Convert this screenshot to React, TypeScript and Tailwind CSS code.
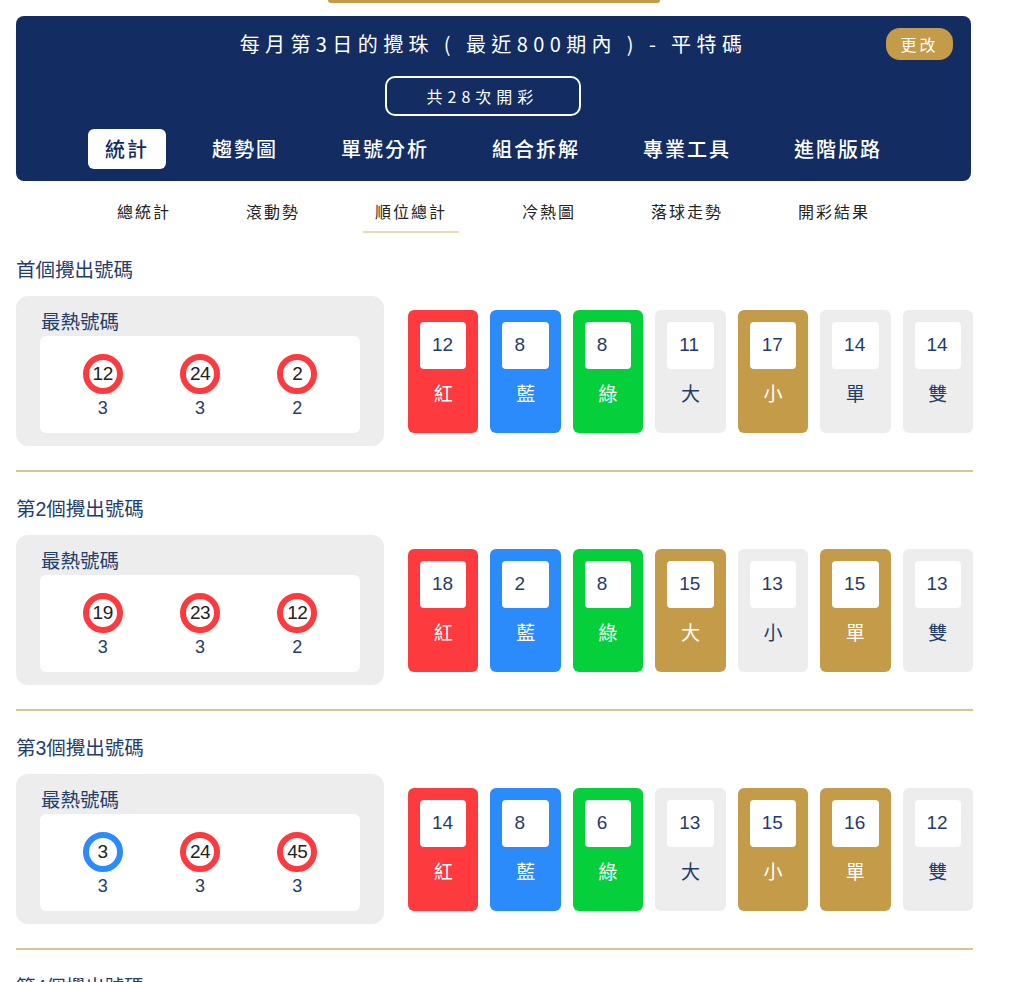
import React from "react";

type Card = { n: number; label: string; bg: string; fg: string };

const RED = "bg-[#fd3a3d]";
const BLUE = "bg-[#2b8bfb]";
const GREEN = "bg-[#05cf3a]";
const GOLD = "bg-[#c49b48]";
const GRAY = "bg-[#ededed]";

function mk(vals: number[], gold: boolean[]): Card[] {
  const labels = ["大", "小", "單", "雙"];
  return [
    { n: vals[0], label: "紅", bg: RED, fg: "text-white" },
    { n: vals[1], label: "藍", bg: BLUE, fg: "text-white" },
    { n: vals[2], label: "綠", bg: GREEN, fg: "text-white" },
    ...labels.map((l, i) => ({
      n: vals[3 + i],
      label: l,
      bg: gold[i] ? GOLD : GRAY,
      fg: gold[i] ? "text-white" : "text-[#1f3d6b]",
    })),
  ];
}

const sections = [
  {
    title: "首個攪出號碼",
    balls: [
      { n: 12, c: 3, color: "border-[#fd3a3d]" },
      { n: 24, c: 3, color: "border-[#fd3a3d]" },
      { n: 2, c: 2, color: "border-[#fd3a3d]" },
    ],
    cards: mk([12, 8, 8, 11, 17, 14, 14], [false, true, false, false]),
  },
  {
    title: "第2個攪出號碼",
    balls: [
      { n: 19, c: 3, color: "border-[#fd3a3d]" },
      { n: 23, c: 3, color: "border-[#fd3a3d]" },
      { n: 12, c: 2, color: "border-[#fd3a3d]" },
    ],
    cards: mk([18, 2, 8, 15, 13, 15, 13], [true, false, true, false]),
  },
  {
    title: "第3個攪出號碼",
    balls: [
      { n: 3, c: 3, color: "border-[#2b8bfb]" },
      { n: 24, c: 3, color: "border-[#fd3a3d]" },
      { n: 45, c: 3, color: "border-[#fd3a3d]" },
    ],
    cards: mk([14, 8, 6, 13, 15, 16, 12], [false, true, true, false]),
  },
];

const mainTabs = ["統計", "趨勢圖", "單號分析", "組合拆解", "專業工具", "進階版路"];
const subTabs = ["總統計", "滾動勢", "順位總計", "冷熱圖", "落球走勢", "開彩結果"];

const cjk = "font-['Noto_Sans_CJK_TC','Noto_Sans',sans-serif]";
const body = "font-['Liberation_Sans','Noto_Sans_CJK_TC',sans-serif]";

export default function App() {
  return (
    <div className={`w-[1023px] min-h-[982px] bg-white overflow-hidden ${body}`}>
      <div className="ml-[328px] w-[332px] h-[3px] bg-[#c49b48] rounded-b-full" />
      <div className="ml-4 mt-[13px] w-[955px] bg-[#132c61] rounded-[8px] pt-3 pb-3">
        <div className={`relative h-8 flex items-center justify-center ${cjk}`}>
          <span className="text-white text-[20px] tracking-[5.4px] font-normal">
            每月第3日的攪珠 ( 最近800期內 ) - 平特碼
          </span>
          <div className="absolute right-[18px] top-0 h-8 w-[67px] rounded-[14px] bg-[#c49b48] flex items-center justify-center text-white text-[16px] tracking-[3px] font-normal">
            更改
          </div>
        </div>
        <div className="flex justify-center mt-4 pr-[22px]">
          <div
            className={`w-[196px] h-10 rounded-[10px] border-2 border-white flex items-center justify-center text-white text-[16px] tracking-[5px] font-normal ${cjk}`}
          >
            共28次開彩
          </div>
        </div>
        <div className={`flex justify-center gap-[29px] mt-[13px] ${cjk}`}>
          {mainTabs.map((t, i) => (
            <div
              key={t}
              className={`h-10 px-[17px] flex items-center rounded-[6px] text-[20px] tracking-[2px] font-medium ${
                i === 0 ? "bg-white text-[#132c61]" : "text-white"
              }`}
            >
              {t}
            </div>
          ))}
        </div>
      </div>

      <div className={`ml-4 w-[955px] mt-[14px] flex justify-center gap-[51px] ${cjk}`}>
        {subTabs.map((t, i) => (
          <div
            key={t}
            className={`px-3 pt-1 pb-[8px] leading-6 text-[16px] tracking-[2px] font-normal text-[#222] border-b-2 ${
              i === 2 ? "border-[#ecd9b0]" : "border-transparent"
            }`}
          >
            {t}
          </div>
        ))}
      </div>

      <div className="ml-4 w-[957px] mt-6">
        {sections.map((s) => (
          <div key={s.title}>
            <div className="text-[19.5px] leading-[26px] text-[#1f3d6b]">{s.title}</div>
            <div className="mt-[13px] flex items-center">
              <div className="w-[368px] h-[150px] bg-[#ededed] rounded-[12px] pt-[14px] px-6">
                <div className="text-[19.5px] leading-6 text-[#1f3d6b] pl-[1px]">最熱號碼</div>
                <div className="mt-[2px] h-[97px] bg-white rounded-[6px] px-[14px] grid grid-cols-3">
                  {s.balls.map((b, i) => (
                    <div key={i} className="flex flex-col items-center pt-[18px]">
                      <div
                        className={`w-10 h-10 rounded-full border-[6px] ${b.color} flex items-center justify-center text-[19px] text-[#222] tracking-[-0.5px]`}
                      >
                        {b.n}
                      </div>
                      <div className="mt-1 text-[18px] leading-5 text-[#1f3d6b]">{b.c}</div>
                    </div>
                  ))}
                </div>
              </div>
              <div className="ml-6 flex-1 flex gap-3">
                {s.cards.map((c, i) => (
                  <div key={i} className={`flex-1 h-[123px] rounded-[6px] ${c.bg} p-3 flex flex-col`}>
                    <div className="h-[47px] bg-white rounded-[4px] flex items-center pl-3 text-[19px] text-[#1f3d6b]">
                      {c.n}
                    </div>
                    <div className={`mt-[14px] text-center text-[19px] leading-6 ${c.fg}`}>{c.label}</div>
                  </div>
                ))}
              </div>
            </div>
            <div className="mt-6 h-[2px] bg-[#dcc48f]" />
            <div className="h-6" />
          </div>
        ))}
        <div className="text-[19.5px] leading-[26px] text-[#1f3d6b]">第4個攪出號碼</div>
      </div>
    </div>
  );
}
